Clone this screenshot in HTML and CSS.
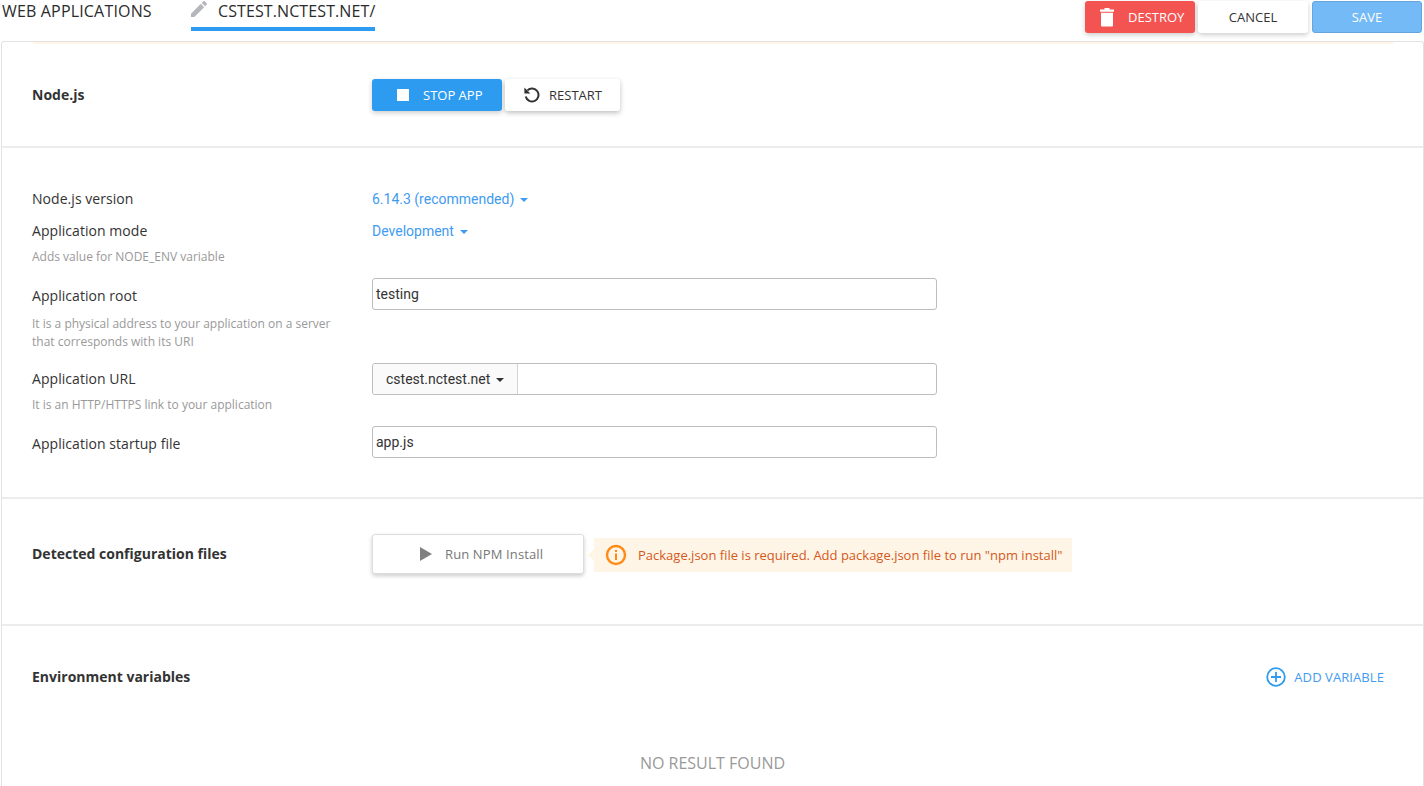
FILE: index.html
```html
<!DOCTYPE html>
<html lang="en">
<head>
<meta charset="utf-8">
<title>Web Applications</title>
<link rel="stylesheet" href="styles.css">
</head>
<body>
<header class="topbar">
  <nav class="crumbs">
    <span class="crumb-root">WEB APPLICATIONS</span>
    <span class="crumb-current">
      <svg class="pencil" viewBox="3 3 18 18" aria-hidden="true"><path d="M3 17.25V21h3.75L17.81 9.94l-3.75-3.75L3 17.25zM20.71 7.04a1 1 0 0 0 0-1.41l-2.34-2.34a1 1 0 0 0-1.41 0l-1.83 1.83 3.75 3.75 1.83-1.83z"/></svg>
      <span>CSTEST.NCTEST.NET/</span>
    </span>
  </nav>
  <div class="top-actions">
    <button class="btn btn-top btn-red">
      <svg class="trash" viewBox="0 0 14 19" aria-hidden="true"><path d="M4.500 0h5v1.500h4.500v2.300H0V1.500h4.500zM1 4.700h12V17.500a1 1 0 0 1-1 1H2a1 1 0 0 1-1-1z"/></svg>
      <span>DESTROY</span>
    </button>
    <button class="btn btn-top btn-white">CANCEL</button>
    <button class="btn btn-top btn-blue-off">SAVE</button>
  </div>
</header>

<main class="card">
  <div class="stripe"></div>
  <section class="sec sec-app">
    <h2 class="sec-title col-label">Node.js</h2>
    <div class="btn-row">
      <button class="btn btn-stop"><i class="stop-square"></i><span>STOP APP</span></button>
      <button class="btn btn-restart">
        <svg class="restart-icon" viewBox="0 0 16 16" aria-hidden="true"><path d="M3.400 3.400A6.500 6.500 0 1 1 1.700 9.600" fill="none" stroke="#333" stroke-width="2"/><path d="M0.400 0.600v6h6z" fill="#333"/></svg>
        <span>RESTART</span>
      </button>
    </div>
  </section>

  <section class="sec sec-form">
    <div class="row row-version">
      <div class="col-label"><div class="label">Node.js version</div></div>
      <div class="link-value">6.14.3 (recommended)<i class="caret"></i></div>
    </div>
    <div class="row row-mode">
      <div class="col-label">
        <div class="label">Application mode</div>
        <div class="help">Adds value for NODE_ENV variable</div>
      </div>
      <div class="link-value">Development<i class="caret"></i></div>
    </div>
    <div class="row row-input">
      <div class="col-label">
        <div class="label">Application root</div>
        <div class="help">It is a physical address to your application on a server<br>that corresponds with its URI</div>
      </div>
      <div class="field"><span class="field-text">testing</span></div>
    </div>
    <div class="row row-input row-url">
      <div class="col-label">
        <div class="label">Application URL</div>
        <div class="help help-tight">It is an HTTP/HTTPS link to your application</div>
      </div>
      <div class="field field-group">
        <div class="addon">cstest.nctest.net<i class="caret caret-dark"></i></div>
      </div>
    </div>
    <div class="row row-input">
      <div class="col-label"><div class="label">Application startup file</div></div>
      <div class="field"><span class="field-text">app.js</span></div>
    </div>
  </section>

  <section class="sec sec-config">
    <h2 class="sec-title col-label">Detected configuration files</h2>
    <button class="btn btn-npm"><i class="play"></i><span>Run NPM Install</span></button>
    <div class="alert">
      <svg class="info-icon" viewBox="0 0 22 22" aria-hidden="true"><circle cx="11" cy="11" r="9" fill="none" stroke="#ff8a14" stroke-width="2.400"/><rect x="10" y="9.500" width="2" height="6.500" fill="#ff8a14"/><rect x="10" y="6" width="2" height="2" fill="#ff8a14"/></svg>
      <span>Package.json file is required. Add package.json file to run "npm install"</span>
    </div>
  </section>

  <section class="sec sec-env">
    <div class="env-head">
      <h2 class="sec-title">Environment variables</h2>
      <button class="add-var">
        <svg class="plus-icon" viewBox="0 0 20 20" aria-hidden="true"><circle cx="10" cy="10" r="8.800" fill="none" stroke="#2d9cf0" stroke-width="1.800"/><path d="M10 5v10M5 10h10" stroke="#2d9cf0" stroke-width="1.800" fill="none"/></svg>
        <span>ADD VARIABLE</span>
      </button>
    </div>
    <p class="empty">NO RESULT FOUND</p>
  </section>
</main>
</body>
</html>
```
FILE: styles.css
```css
* { box-sizing: border-box; }
html, body { height: 100%; }
body {
  margin: 0;
  overflow: hidden;
  background: #fff;
  color: #333;
  font-family: "Open Sans", sans-serif;
  font-size: 14px;
}
button { font-family: inherit; margin: 0; cursor: pointer; }

.topbar {
  height: 41px;
  display: flex;
  justify-content: space-between;
  padding: 0 2px 0 2px;
}
.crumbs { display: flex; align-items: flex-start; }
.crumb-root { font-size: 16px; line-height: 22px; color: #2b2b2b; width: 189px; white-space: nowrap; letter-spacing: .17px; }
.crumb-current {
  display: flex;
  align-items: flex-start;
  height: 31px;
  border-bottom: 4px solid #2d9cf0;
  font-size: 16px;
  line-height: 22px;
  color: #2b2b2b;
  white-space: nowrap;
  letter-spacing: .1px;
}
.pencil { width: 16px; height: 16px; fill: #b4b6bb; margin: 1px 11px 0 0; }

.top-actions { display: flex; gap: 3px; padding-top: 1px; }
.btn {
  border: 0;
  border-radius: 3px;
  font-size: 13px;
  display: flex;
  align-items: center;
  white-space: nowrap;
}
.btn-top { width: 110px; height: 32px; justify-content: center; }
.btn-red { background: #f35451; color: #fff; box-shadow: 0 2px 5px rgba(0,0,0,.2); justify-content: flex-start; padding-left: 15px; }
.btn-white { background: #fff; color: #333; box-shadow: 0 2px 5px rgba(0,0,0,.2); }
.btn-blue-off { background: #74baf6; color: #fff; border: 1px solid #66a6dd; margin-left: 1px; }
.trash { width: 14px; height: 19px; fill: #fff; margin-right: 14px; flex: none; }

.card {
  position: relative;
  margin: 0 0 0 1px;
  width: 1423px;
  min-height: 760px;
  border: 1px solid #e2e2e2;
  border-bottom: 0;
  border-radius: 3px 3px 0 0;
}
.stripe {
  position: absolute;
  top: 0;
  left: 31px;
  width: 1360px;
  height: 2px;
  background: #fff6e9;
}

.sec { border-bottom: 2px solid #ececec; padding-left: 30px; }
.sec:last-child { border-bottom: 0; }
.col-label { width: 340px; flex: none; }
.sec-title { margin: 0; font-size: 14px; line-height: 20px; font-weight: 700; color: #333; }

.sec-app { height: 106px; display: flex; align-items: center; padding-top: 2px; }
.btn-row { display: flex; gap: 3px; }
.btn-stop {
  width: 130px; height: 32px;
  background: #2d9cf0; color: #fff;
  box-shadow: 0 2px 5px rgba(0,0,0,.2);
  padding-left: 25px;
}
.stop-square { width: 12px; height: 12px; background: #fff; margin-right: 14px; }
.btn-restart {
  width: 115px; height: 32px;
  background: #fff; color: #333;
  box-shadow: 0 2px 5px rgba(0,0,0,.25);
  padding-left: 19px;
}
.restart-icon { width: 16px; height: 16px; margin-right: 9px; flex: none; }

.sec-form { height: 351px; padding-top: 39px; }
.row { display: flex; align-items: flex-start; }
.row-version { height: 24px; margin-bottom: 8px; }
.row-mode { margin-bottom: 12px; }
.row-input { margin-bottom: 12px; }
.row-input .label { margin-top: 6px; }
.row-url .label { margin-top: 4px; }
.label { font-size: 14px; line-height: 24px; color: #333; letter-spacing: .05px; }
.help { font-size: 12px; line-height: 18px; color: #999; margin-top: 5px; }
.row-input .help { margin-top: 7px; }
.row-input .help-tight { margin-top: 5px; }
.link-value {
  font-family: Roboto, sans-serif;
  font-size: 14px;
  line-height: 24px;
  color: #3f9bf0;
  display: flex;
  align-items: center;
}
.caret {
  width: 0; height: 0;
  margin-left: 6px;
  margin-top: 1px;
  border-left: 4px solid transparent;
  border-right: 4px solid transparent;
  border-top: 4px solid #3f9bf0;
}
.caret-dark { border-top-color: #333; }

.field {
  width: 565px;
  height: 32px;
  border: 1px solid #bdbdbd;
  border-radius: 3px;
  display: flex;
  align-items: center;
  background: #fff;
}
.field-text { font-family: Roboto, sans-serif; font-size: 14px; color: #333; padding-left: 3px; }
.addon {
  width: 145px;
  height: 100%;
  background: #fafafa;
  border-right: 1px solid #d4d4d4;
  border-radius: 3px 0 0 3px;
  font-family: Roboto, sans-serif;
  font-size: 14px;
  color: #333;
  display: flex;
  align-items: center;
  padding-left: 13px;
}

.sec-config { height: 127px; display: flex; align-items: center; padding-bottom: 15px; }
.btn-npm {
  width: 212px; height: 40px;
  background: #fff;
  border: 1px solid #ddd;
  color: #777;
  font-size: 13px;
  letter-spacing: .13px;
  box-shadow: 0 2px 4px rgba(0,0,0,.2);
  padding-left: 47px;
}
.play {
  width: 0; height: 0;
  border-top: 7px solid transparent;
  border-bottom: 7px solid transparent;
  border-left: 12px solid #808080;
  margin-right: 13px;
}
.alert {
  position: relative;
  margin: 2px 0 0 10px;
  height: 34px;
  width: 478px;
  background: #fff5e6;
  color: #d4581c;
  font-size: 13px;
  display: flex;
  align-items: center;
  padding-left: 11px;
  white-space: nowrap;
}
.alert::before {
  content: "";
  position: absolute;
  left: -6px;
  top: 11px;
  border-top: 6px solid transparent;
  border-bottom: 6px solid transparent;
  border-right: 6px solid #fff5e6;
}
.info-icon { width: 22px; height: 22px; margin-right: 11px; flex: none; }

.sec-env { padding-right: 39px; padding-top: 41px; }
.env-head { display: flex; justify-content: space-between; align-items: center; height: 20px; }
.add-var {
  display: flex; align-items: center;
  border: 0; background: none; padding: 0;
  color: #3f9bf0; font-size: 13px; letter-spacing: .08px;
}
.plus-icon { width: 20px; height: 20px; margin-right: 8px; flex: none; }
.empty {
  margin: 65px -39px 0 -30px;
  text-align: center;
  font-size: 16px;
  line-height: 22px;
  color: #999;
}
```
